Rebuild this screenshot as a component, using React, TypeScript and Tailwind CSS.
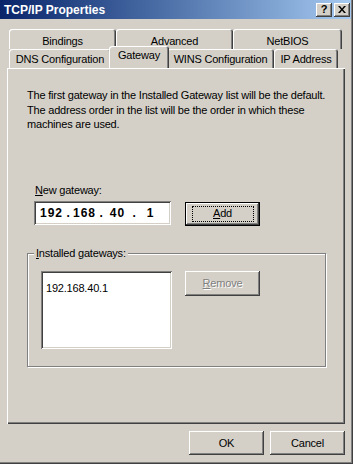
import React from "react";

const FONT = { fontFamily: '"Liberation Sans", Arial, sans-serif' };

function Tab({ label, w, selected = false, back = false }: { label: string; w: number; selected?: boolean; back?: boolean }) {
  return (
    <div
      className={
        "flex justify-center rounded-t-[3px] bg-[#d4d0c8] shadow-[inset_1px_1px_#ffffff,inset_-1px_0_#404040,inset_-2px_0_#808080] " +
        (selected
          ? "relative z-10 -mt-[2px] -mx-[2px] h-[22px] pt-[3px]"
          : back
          ? "h-full pt-[6px]"
          : "h-full pt-[4px]")
      }
      style={{ width: w }}
    >
      <span className="text-[11px] leading-[13px] text-black">{label}</span>
    </div>
  );
}

function Button({
  children,
  w,
  h = 24,
  isDefault = false,
  disabled = false,
}: {
  children: React.ReactNode;
  w: number;
  h?: number;
  isDefault?: boolean;
  disabled?: boolean;
}) {
  return (
    <div
      className={
        "flex items-center justify-center bg-[#d4d0c8] " +
        (isDefault
          ? "border border-black shadow-[inset_-1px_-1px_#404040,inset_1px_1px_#ffffff,inset_-2px_-2px_#808080]"
          : "shadow-[inset_-1px_-1px_#404040,inset_1px_1px_#ffffff,inset_-2px_-2px_#808080]")
      }
      style={{ width: w, height: h }}
    >
      {isDefault ? (
        <div className="flex h-[16px] w-[62px] items-center justify-center border border-dotted border-black">
          <span className="text-[11px] leading-[13px] text-black">{children}</span>
        </div>
      ) : (
        <span
          className={
            "text-[11px] leading-[13px] " +
            (disabled ? "text-[#808080] [text-shadow:1px_1px_0_#ffffff]" : "text-black")
          }
        >
          {children}
        </span>
      )}
    </div>
  );
}

export default function App() {
  return (
    <div
      className="flex h-[464px] w-[353px] flex-col overflow-hidden bg-[#d4d0c8] tracking-[-0.2px] text-black shadow-[inset_-1px_-1px_#404040,inset_-2px_-2px_#808080]"
      style={FONT}
    >
      {/* Title bar */}
      <div className="flex h-[19px] w-[351px] shrink-0 items-center justify-between bg-gradient-to-r from-[#0a246a] to-[#a6caf0] pl-[4px] pr-[1px]">
        <span className="text-[12px] font-bold leading-[14px] tracking-[0px] text-white">TCP/IP Properties</span>
        <div className="flex gap-[2px]">
          <div className="flex h-[14px] w-[16px] items-center justify-center bg-[#d4d0c8] shadow-[inset_-1px_-1px_#404040,inset_1px_1px_#ffffff,inset_-2px_-2px_#808080]">
            <span className="text-[11px] font-bold leading-[11px] text-black">?</span>
          </div>
          <div className="flex h-[14px] w-[16px] items-center justify-center bg-[#d4d0c8] shadow-[inset_-1px_-1px_#404040,inset_1px_1px_#ffffff,inset_-2px_-2px_#808080]">
            <svg width="8" height="7" viewBox="0 0 8 7">
              <path d="M0 0h2l2 2.5L6 0h2L5 3.5 8 7H6L4 4.5 2 7H0l3-3.5z" fill="#000" />
            </svg>
          </div>
        </div>
      </div>

      {/* Tabs */}
      <div className="ml-[9px] mt-[10px] flex h-[20px] shrink-0">
        <Tab label="Bindings" w={107} back />
        <Tab label="Advanced" w={117} back />
        <Tab label="NetBIOS" w={109} back />
      </div>
      <div className="ml-[9px] flex h-[19px] shrink-0 items-end">
        <Tab label="DNS Configuration" w={102} />
        <Tab label="Gateway" w={60} selected />
        <Tab label="WINS Configuration" w={107} />
        <Tab label="IP Address" w={64} />
      </div>

      {/* Panel */}
      <div className="ml-[7px] flex h-[356px] w-[338px] shrink-0 flex-col border-l border-t border-white shadow-[inset_-1px_-1px_#404040,inset_-2px_-2px_#808080]">
        <p className="ml-[19px] mt-[19px] text-[11px] leading-[14.5px]">
          The first gateway in the Installed Gateway list will be the default.
          <br />
          The address order in the list will be the order in which these
          <br />
          machines are used.
        </p>

        <div className="ml-[27px] mt-[52px] text-[11px] leading-[13px]">
          <span className="underline">N</span>ew gateway:
        </div>

        <div className="mt-[4px] flex items-start">
          <div className="ml-[26px] flex h-[24px] w-[137px] items-center bg-white pl-[4px] shadow-[inset_1px_1px_#808080,inset_-1px_-1px_#ffffff,inset_2px_2px_#404040,inset_-2px_-2px_#d4d0c8]">
            {["192", "168", "40", "1"].map((n, i) => (
              <React.Fragment key={i}>
                {i > 0 && (
                  <span className="w-[6px] text-center text-[12px] font-bold leading-[14px]">.</span>
                )}
                <span className="w-[27px] text-center text-[12px] font-bold leading-[14px] tracking-[1px]">
                  {n}
                </span>
              </React.Fragment>
            ))}
          </div>
          <div className="ml-[14px] mt-[1px]">
            <Button w={75} isDefault>
              <span className="underline">A</span>dd
            </Button>
          </div>
        </div>

        {/* Group box */}
        <div className="relative ml-[19px] mt-[27px] flex h-[114px] w-[299px] items-start border border-[#808080] shadow-[inset_1px_1px_#ffffff,1px_1px_#ffffff]">
          <span className="absolute -top-[7px] left-[6px] bg-[#d4d0c8] px-[2px] text-[11px] leading-[13px]">
            <span className="underline">I</span>nstalled gateways:
          </span>
          <div className="ml-[13px] mt-[17px] h-[78px] w-[131px] bg-white pl-[5px] pt-[4px] shadow-[inset_1px_1px_#808080,inset_-1px_-1px_#ffffff,inset_2px_2px_#404040,inset_-2px_-2px_#d4d0c8]">
            <span className="text-[11px] leading-[13px]">192.168.40.1</span>
          </div>
          <div className="ml-[13px] mt-[17px]">
            <Button w={75} h={25} disabled>
              <span className="underline">R</span>emove
            </Button>
          </div>
        </div>
      </div>

      {/* Bottom buttons */}
      <div className="mt-[7px] flex justify-end gap-[6px] pr-[8px]">
        <Button w={75}>OK</Button>
        <Button w={75}>Cancel</Button>
      </div>
    </div>
  );
}
